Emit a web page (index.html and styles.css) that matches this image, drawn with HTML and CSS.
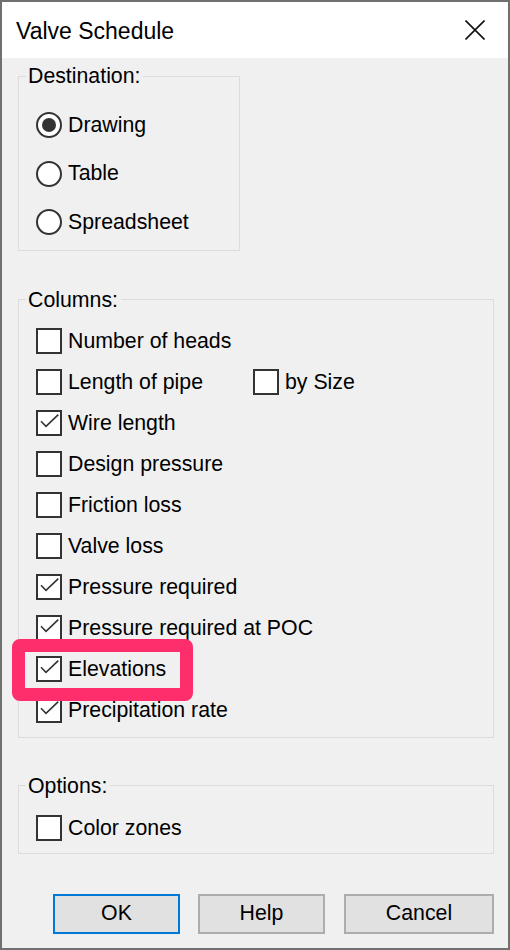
FILE: index.html
```html
<!DOCTYPE html>
<html lang="en">
<head>
    <meta charset="UTF-8">
    <meta name="viewport" content="width=device-width, initial-scale=1.0">
    <link rel="stylesheet" href="styles.css">
    <title>Valve Schedule</title>
</head>
<body>
    <div class="dialog">

        <div class="titlebar">
            <span class="title">Valve Schedule</span>
            <svg class="close" width="20" height="20" viewBox="0 0 20 20">
                <path d="M0.5 0.5 L19.5 19.5 M19.5 0.5 L0.5 19.5" stroke="#111" stroke-width="1.6" fill="none"/>
            </svg>
        </div>

        <div class="content">

            <fieldset class="group dest">
                <legend>Destination:</legend>
                <div class="row"><span class="radio"><span class="dot"></span></span>Drawing</div>
                <div class="row"><span class="radio"></span>Table</div>
                <div class="row"><span class="radio"></span>Spreadsheet</div>
            </fieldset>

            <fieldset class="group cols">
                <legend>Columns:</legend>
                <div class="row"><span class="box"></span>Number of heads</div>
                <div class="row">
                    <span class="opt wide"><span class="box"></span>Length of pipe</span>
                    <span class="opt"><span class="box"></span>by Size</span>
                </div>
                <div class="row"><span class="box"><svg viewBox="0 0 22 22"><path d="M3 9.3 L8 14.3 L20.3 2.7" /></svg></span>Wire length</div>
                <div class="row"><span class="box"></span>Design pressure</div>
                <div class="row"><span class="box"></span>Friction loss</div>
                <div class="row"><span class="box"></span>Valve loss</div>
                <div class="row"><span class="box"><svg viewBox="0 0 22 22"><path d="M3 9.3 L8 14.3 L20.3 2.7" /></svg></span>Pressure required</div>
                <div class="row"><span class="box"><svg viewBox="0 0 22 22"><path d="M3 9.3 L8 14.3 L20.3 2.7" /></svg></span>Pressure required at POC</div>
                <div class="row marked">
                    <span class="box"><svg viewBox="0 0 22 22"><path d="M3 9.3 L8 14.3 L20.3 2.7" /></svg></span>Elevations
                    <span class="highlight"></span>
                </div>
                <div class="row"><span class="box"><svg viewBox="0 0 22 22"><path d="M3 9.3 L8 14.3 L20.3 2.7" /></svg></span>Precipitation rate</div>
            </fieldset>

            <fieldset class="group opts">
                <legend>Options:</legend>
                <div class="row"><span class="box"></span>Color zones</div>
            </fieldset>

            <div class="buttons">
                <button class="btn default">OK</button>
                <button class="btn">Help</button>
                <button class="btn cancel">Cancel</button>
            </div>
        </div>
    </div>
</body>
</html>
```

FILE: styles.css
```css
*{
    margin:0;
    box-sizing:border-box;
    font-family:"Liberation Sans", Arial, sans-serif;
}
body{
    width:510px;
    height:950px;
    background:#f0f0f0;
    color:#000;
}
.dialog{
    width:510px;
    height:950px;
    border:2px solid #707070;
    background:#f0f0f0;
}
.titlebar{
    height:56px;
    background:#fff;

    display:flex;
    align-items:center;
    justify-content:space-between;

    padding:0 23px 0 14px;
}
.title{
    font-size:23px;
    padding-top:3px;
}
.close{
    display:block;
}
.content{
    padding:6px 14px 0 16px;
    font-size:21.3px;
}
.group{
    border:1px solid #dcdcdc;
    padding:0 0 0 17px;
    min-width:0;
}
.group legend{
    font-size:21.3px;
    line-height:24px;
    padding:0 3px 0 2px;
    margin-left:-10px;
}
.dest{
    width:222px;
    padding-top:13px;
    padding-bottom:3px;
}
.dest .row{
    height:48.5px;
}
.cols{
    margin-top:37px;
    padding-top:9px;
    padding-bottom:6px;
}
.opts{
    margin-top:36px;
    padding-top:10px;
    padding-bottom:4px;
}
.row{
    height:41px;
    display:flex;
    align-items:center;
}
.opt{
    display:flex;
    align-items:center;
}
.wide{
    width:217px;
}
.radio{
    width:26px;
    height:26px;
    border:2px solid #333;
    border-radius:50%;
    background:#fff;
    margin-right:6px;

    display:flex;
    align-items:center;
    justify-content:center;
}
.dot{
    width:14px;
    height:14px;
    border-radius:50%;
    background:#333;
}
.box{
    width:26px;
    height:26px;
    border:2px solid #333;
    background:#fff;
    margin-right:6px;
    flex-shrink:0;
}
.box svg{
    display:block;
    width:22px;
    height:22px;
}
.box path{
    fill:none;
    stroke:#333;
    stroke-width:1.6;
}
.marked{
    position:relative;
}
.highlight{
    position:absolute;
    left:-24px;
    top:-10px;
    width:181px;
    height:62px;
    border:13px solid #fd2e6b;
    border-radius:8px;
}
.buttons{
    margin-top:40px;
    display:flex;
    justify-content:flex-end;
    gap:18px;
}
.btn{
    width:127px;
    height:40px;
    background:#e1e1e1;
    border:2px solid #adadad;
    font-size:21.3px;
    color:#000;
}
.btn.default{
    border-color:#0078d7;
}
.btn.cancel{
    width:150px;
    margin-left:1px;
}
```
